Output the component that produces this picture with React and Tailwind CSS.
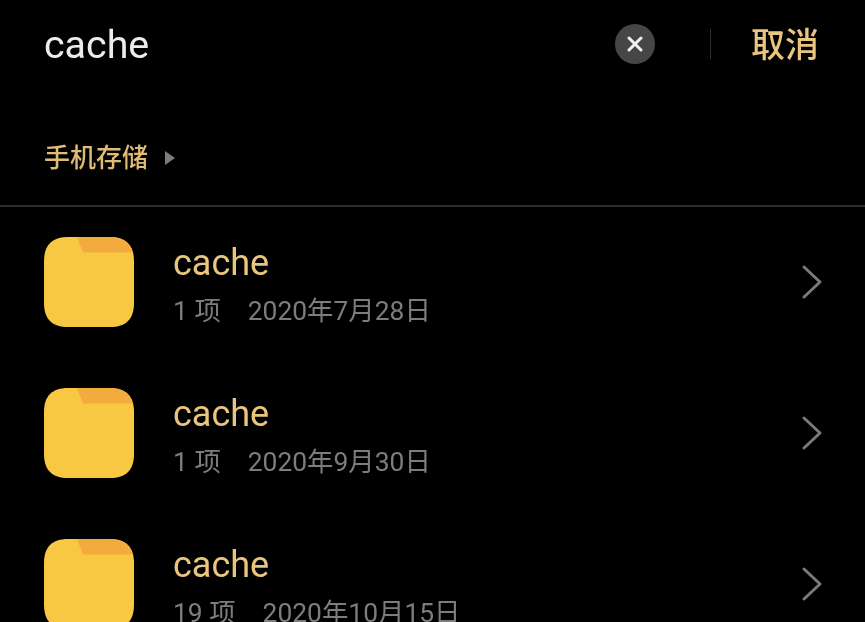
const font = { fontFamily: '"Roboto", "Noto Sans CJK SC", sans-serif' };

const folders = [
  { count: "1 项", date: "2020年7月28日" },
  { count: "1 项", date: "2020年9月30日" },
  { count: "19 项", date: "2020年10月15日" },
];

function FolderIcon() {
  return (
    <svg width="90" height="90" viewBox="0 0 90 90" className="shrink-0">
      <path d="M24 0H66C82 0 90 8 90 24V66C90 82 82 90 66 90H24C8 90 0 82 0 66V24C0 8 8 0 24 0Z" fill="#f8c842" />
      <path d="M33 0H66C78 0 86 5 88.5 15.5H39Z" fill="#f2ab3c" />
    </svg>
  );
}

function Row({ count, date }) {
  return (
    <div className="flex items-center h-[151px] shrink-0 pl-11 pr-[42px]">
      <FolderIcon />
      <div className="ml-[39px] flex-1 mt-[6px]">
        <p className="text-[36px] leading-[40px] text-[#e9c57e]">cache</p>
        <p className="mt-[13px] text-[26.4px] leading-[30px] text-[#7d7d7d]">
          {count}
          <span className="ml-[27px]">{date}</span>
        </p>
      </div>
      <svg width="22" height="36" viewBox="0 0 22 36" fill="none" stroke="#7a7a7a" strokeWidth="3" strokeLinecap="round" strokeLinejoin="round">
        <path d="M3 3L19 18L3 33" />
      </svg>
    </div>
  );
}

export default function App() {
  return (
    <div className="w-[865px] h-[622px] overflow-hidden bg-black flex flex-col blur-[0.6px]" style={font}>
      <div className="flex items-center h-[88px] shrink-0 pl-11 pr-[46px]">
        <p className="flex-1 text-[39.4px] leading-[44px] text-[#ececec] mt-[2px]">cache</p>
        <div className="w-10 h-10 rounded-full bg-[#464646] flex items-center justify-center">
          <svg width="16" height="16" viewBox="0 0 16 16" stroke="#f2f2f2" strokeWidth="3" strokeLinecap="round">
            <path d="M2 2L14 14M14 2L2 14" />
          </svg>
        </div>
        <div className="ml-[55px] w-px h-[30px] bg-[#2e2e2e]" />
        <p className="ml-[40px] text-[34px] leading-[44px] font-medium text-[#e9c57e] mt-[2px]">取消</p>
      </div>
      <div className="flex items-center h-[119px] shrink-0 border-b-2 border-[#2c2c2c] pl-11 pt-[23px]">
        <p className="text-[26px] leading-[32px] font-medium text-[#e0bb74]">手机存储</p>
        <div className="ml-[17px] w-0 h-0 border-y-[7px] border-y-transparent border-l-[10px] border-l-[#7d7d7d]" />
      </div>
      <div className="flex flex-col -mt-[1px]">
        <Row {...folders[0]} />
        <Row {...folders[1]} />
        <Row {...folders[2]} />
      </div>
    </div>
  );
}
